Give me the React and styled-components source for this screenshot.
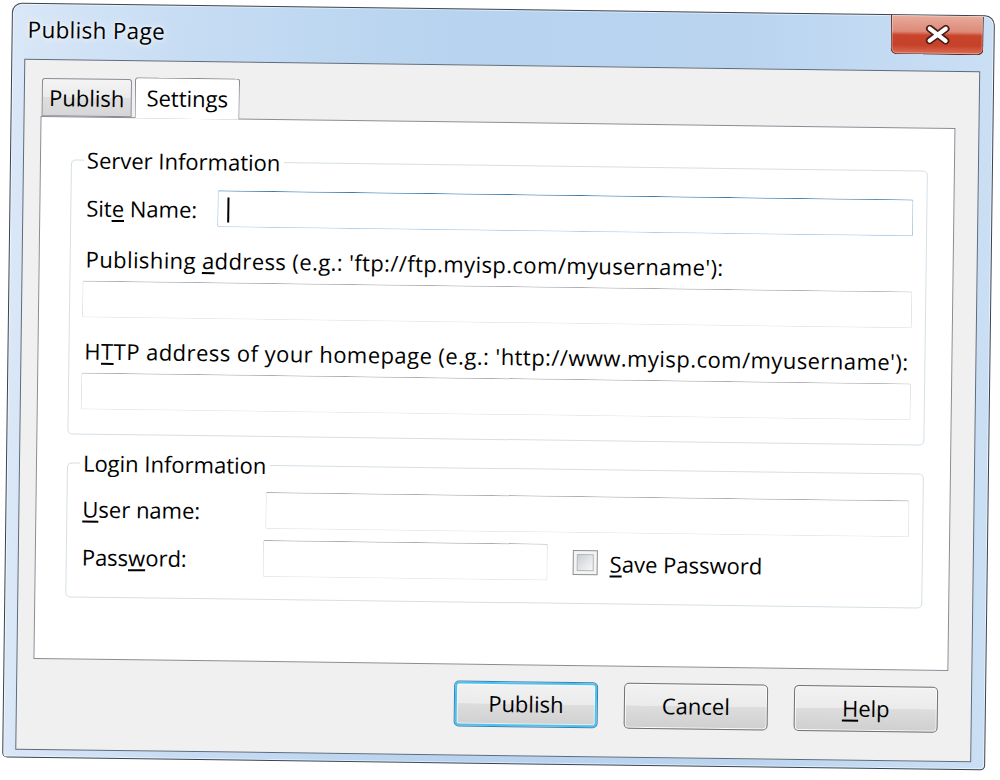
import React from 'react';
import styled, { createGlobalStyle } from 'styled-components';

const GlobalStyle = createGlobalStyle`
  html, body { margin: 0; padding: 0; background: #ffffff; }
  body {
    font-family: "Open Sans", "Noto Sans", "DejaVu Sans", sans-serif;
    color: #000;
  }
  #root { width: 1000px; height: 780px; overflow: hidden; }
`;

const Page = styled.div`
  width: 1000px;
  height: 780px;
  box-sizing: border-box;
  padding: 9px 0 0 7px;
`;

const Window = styled.div`
  width: 983px;
  height: 755px;
  box-sizing: border-box;
  display: flex;
  flex-direction: column;
  border: 1px solid #3a4350;
  border-radius: 10px 10px 5px 5px;
  background: linear-gradient(
    to right,
    #d9e7f7 0%,
    #c6dcf3 18%,
    #b7d3ef 45%,
    #bad4f0 75%,
    #cadff4 100%
  );
  box-shadow: inset 0 0 0 1px rgba(255, 255, 255, 0.55);
  transform: rotate(0.75deg);
  transform-origin: 493px 381px;
`;

const TitleBar = styled.div`
  height: 55px;
  flex-shrink: 0;
  display: flex;
  align-items: flex-start;
  justify-content: space-between;
  padding: 0 10px 0 15px;
`;

const Title = styled.div`
  font-size: 22.5px;
  line-height: 30px;
  margin-top: 11px;
  letter-spacing: 0.3px;
  color: #000;
  text-shadow: 0 0 8px rgba(255, 255, 255, 0.95), 0 0 3px rgba(255, 255, 255, 0.9);
`;

const CloseButton = styled.div`
  width: 93px;
  height: 39px;
  box-sizing: border-box;
  border: 1px solid #5c2219;
  border-top: none;
  border-radius: 0 0 6px 6px;
  background: linear-gradient(
    to bottom,
    #e8ab9c 0%,
    #dc8a78 42%,
    #c9442a 52%,
    #c5412a 78%,
    #dc6c52 100%
  );
  box-shadow: inset 0 0 0 1px rgba(255, 255, 255, 0.35);
  display: flex;
  align-items: center;
  justify-content: center;
`;

const Client = styled.div`
  flex: 1;
  margin: 0 13px 7px 12px;
  border: 1px solid #5d6b7c;
  background: #f0f0f0;
  display: flex;
  flex-direction: column;
`;

const TabStrip = styled.div`
  display: flex;
  align-items: flex-end;
  gap: 3px;
  height: 40px;
  margin: 16px 0 0 17px;
`;

const Tab = styled.div`
  position: relative;
  box-sizing: border-box;
  width: ${(p) => (p.$active ? 105 : 90)}px;
  height: ${(p) => (p.$active ? 41 : 38)}px;
  margin-bottom: ${(p) => (p.$active ? -1 : 0)}px;
  z-index: ${(p) => (p.$active ? 2 : 1)};
  border: 1px solid #898c95;
  border-bottom: ${(p) => (p.$active ? 'none' : '1px solid #898c95')};
  border-radius: 3px 3px 0 0;
  background: ${(p) =>
    p.$active
      ? '#ffffff'
      : 'linear-gradient(to bottom, #f4f4f4 0%, #ebebeb 50%, #dedede 51%, #d6d6d6 100%)'};
  font-size: 22px;
  line-height: 28px;
  display: flex;
  align-items: center;
  justify-content: center;
  padding-bottom: ${(p) => (p.$active ? 3 : 0)}px;
`;

const Panel = styled.div`
  width: 915px;
  height: 543px;
  margin-left: 16px;
  box-sizing: border-box;
  border: 1px solid #898c95;
  background: #ffffff;
  padding: 0 24px 0 30px;
`;

const Group = styled.fieldset`
  margin: ${(p) => p.$top}px 0 0 0;
  width: 857px;
  box-sizing: border-box;
  min-width: 0;
  border: 1px solid #d5dfe5;
  border-radius: 5px;
  padding: ${(p) => p.$padTop}px 13px ${(p) => p.$padBottom}px 12px;
`;

const Legend = styled.legend`
  font-size: 22px;
  line-height: 28px;
  padding: 0 4px 0 3px;
  color: #000;
`;

const Row = styled.div`
  display: flex;
  align-items: center;
  margin-top: ${(p) => p.$mt || 0}px;
`;

const RowLabel = styled.div`
  width: ${(p) => p.$w}px;
  flex-shrink: 0;
  box-sizing: border-box;
  padding-left: 3px;
  font-size: 22px;
  line-height: 28px;
  white-space: nowrap;
`;

const FieldLabel = styled.div`
  margin-top: 19px;
  padding-left: 3px;
  font-size: 22px;
  line-height: 28px;
  letter-spacing: ${(p) => p.$ls || 0}px;
  white-space: nowrap;
`;

const TextBox = styled.div`
  box-sizing: border-box;
  height: 37px;
  margin-top: ${(p) => p.$mt || 0}px;
  ${(p) => (p.$w ? `width: ${p.$w}px; flex-shrink: 0;` : 'flex: 1;')}
  border: 1px solid;
  border-radius: 2px;
  border-color: ${(p) =>
    p.$focused
      ? '#3d7bad #a4c9e3 #b5cfe7 #a4c9e3'
      : '#abadb3 #e2e3ea #e3e9ef #e2e3ea'};
  background: #ffffff;
  display: flex;
  align-items: center;
  padding-left: 9px;
`;

const Caret = styled.span`
  display: block;
  width: 2px;
  height: 25px;
  background: #000;
  margin-top: 2px;
`;

const Mn = styled.span`
  text-decoration: underline;
  text-decoration-thickness: 2px;
  text-underline-offset: 3px;
`;

const CheckBox = styled.div`
  width: 25px;
  height: 25px;
  box-sizing: border-box;
  margin-left: 25px;
  border: 1px solid #8e8f8f;
  padding: 3px;
  background: #f4f4f4;
  flex-shrink: 0;
`;

const CheckInner = styled.div`
  width: 100%;
  height: 100%;
  box-sizing: border-box;
  border: 1px solid #b1b5ba;
  background: linear-gradient(135deg, #c9cdd2 0%, #e4e6e8 55%, #f7f7f7 100%);
`;

const CheckLabel = styled.div`
  margin-left: 12px;
  font-size: 22px;
  line-height: 28px;
  white-space: nowrap;
`;

const ButtonRow = styled.div`
  display: flex;
  justify-content: flex-end;
  gap: 26px;
  margin-top: 16px;
  padding-right: 33px;
`;

const Button = styled.div`
  width: 144px;
  height: 46px;
  box-sizing: border-box;
  border: 1px solid ${(p) => (p.$default ? '#3c7fb1' : '#707070')};
  border-radius: 5px;
  background: linear-gradient(
    to bottom,
    #f2f2f2 0%,
    #ebebeb 49%,
    #dddddd 50%,
    #cfcfcf 100%
  );
  box-shadow: ${(p) =>
    p.$default
      ? 'inset 0 0 0 2px #48c4f2, inset 0 0 0 3px rgba(255,255,255,0.6)'
      : 'inset 0 0 0 1px #fbfbfb'};
  font-size: 22px;
  line-height: 28px;
  display: flex;
  align-items: center;
  justify-content: center;
  padding-bottom: 2px;
`;

function CloseGlyph() {
  return (
    <svg width="26" height="20" viewBox="0 0 26 20">
      <path
        d="M5 4 L21 16 M21 4 L5 16"
        stroke="#4a1d16"
        strokeWidth="7.5"
        strokeLinecap="round"
        fill="none"
      />
      <path
        d="M5 4 L21 16 M21 4 L5 16"
        stroke="#ffffff"
        strokeWidth="4.2"
        strokeLinecap="round"
        fill="none"
      />
    </svg>
  );
}

export default function App() {
  return (
    <>
      <GlobalStyle />
      <Page>
        <Window>
          <TitleBar>
            <Title>Publish Page</Title>
            <CloseButton>
              <CloseGlyph />
            </CloseButton>
          </TitleBar>
          <Client>
            <TabStrip>
              <Tab>Publish</Tab>
              <Tab $active>Settings</Tab>
            </TabStrip>
            <Panel>
              <Group $top={28} $padTop={15} $padBottom={24}>
                <Legend>Server Information</Legend>
                <Row>
                  <RowLabel $w={134}>
                    Sit<Mn>e</Mn> Name:
                  </RowLabel>
                  <TextBox $focused>
                    <Caret />
                  </TextBox>
                </Row>
                <FieldLabel $ls={0.4}>
                  Publishing <Mn>a</Mn>ddress (e.g.: 'ftp://ftp.myisp.com/myusername'):
                </FieldLabel>
                <TextBox $mt={8} />
                <FieldLabel $ls={0.45}>
                  H<Mn>T</Mn>TP address of your homepage (e.g.: 'http://www.myisp.com/myusername'):
                </FieldLabel>
                <TextBox $mt={8} />
              </Group>
              <Group $top={14} $padTop={13} $padBottom={22}>
                <Legend>Login Information</Legend>
                <Row>
                  <RowLabel $w={186}>
                    <Mn>U</Mn>ser name:
                  </RowLabel>
                  <TextBox />
                </Row>
                <Row $mt={11}>
                  <RowLabel $w={184}>
                    Pass<Mn>w</Mn>ord:
                  </RowLabel>
                  <TextBox $w={285} />
                  <CheckBox>
                    <CheckInner />
                  </CheckBox>
                  <CheckLabel>
                    <Mn>S</Mn>ave Password
                  </CheckLabel>
                </Row>
              </Group>
            </Panel>
            <ButtonRow>
              <Button $default>Publish</Button>
              <Button>Cancel</Button>
              <Button>
                <span>
                  <Mn>H</Mn>elp
                </span>
              </Button>
            </ButtonRow>
          </Client>
        </Window>
      </Page>
    </>
  );
}
